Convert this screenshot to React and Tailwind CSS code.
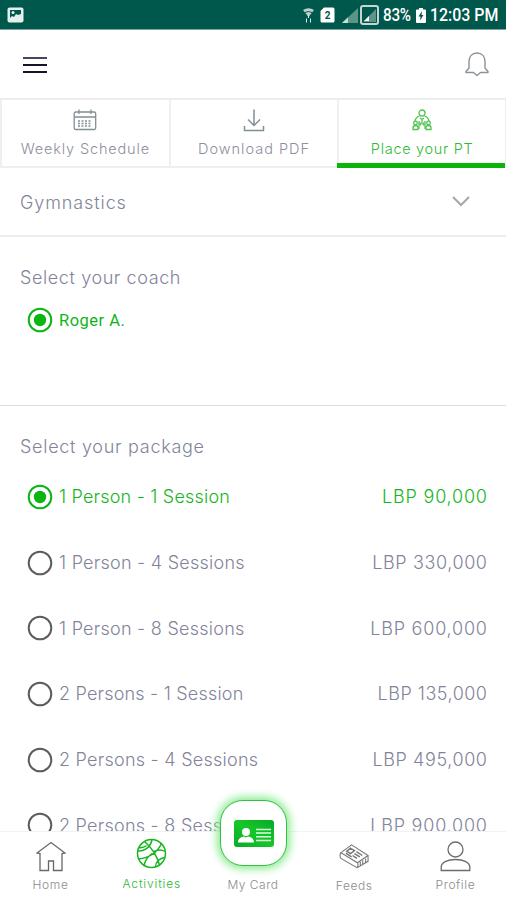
import { useState } from "react";

const packages = [
  { name: "1 Person - 1 Session", price: "LBP 90,000", nameCls: "tracking-[0.2px]", priceCls: "tracking-[0.8px] -mr-[0.8px]" },
  { name: "1 Person - 4 Sessions", price: "LBP 330,000", nameCls: "tracking-[0.25px]", priceCls: "tracking-[0.6px] -mr-[0.6px]" },
  { name: "1 Person - 8 Sessions", price: "LBP 600,000", nameCls: "tracking-[0.25px]", priceCls: "tracking-[0.8px] -mr-[0.8px]" },
  { name: "2 Persons - 1 Session", price: "LBP 135,000", nameCls: "tracking-[0.2px]", priceCls: "tracking-[0.5px] -mr-[0.5px]" },
  { name: "2 Persons - 4 Sessions", price: "LBP 495,000", nameCls: "tracking-[0.25px]", priceCls: "tracking-[0.6px] -mr-[0.6px]" },
  { name: "2 Persons - 8 Sessions", price: "LBP 900,000", nameCls: "tracking-[0.25px]", priceCls: "tracking-[0.8px] -mr-[0.8px]" },
];

function StatusBar() {
  return (
    <div className="h-[30px] shrink-0 bg-[#00574b] border-b border-[#7fa59e] flex items-center px-[7px] text-white">
      <svg width="17" height="16" viewBox="0 0 17 16">
        <rect x="0.5" y="0.5" width="16" height="15" rx="2" fill="#e4f0ed" />
        <path d="M3 3h11v4l-3 1-2-1-2 3-2-1-2 2z" fill="#00574b" />
        <circle cx="6" cy="5.5" r="1.500" fill="#e4f0ed" />
      </svg>

      <div className="ml-auto flex items-center pt-px">
        {/* wifi */}
        <svg className="mr-[5px]" width="13" height="17" viewBox="0 0 13 17" fill="none" stroke="#dcebe8">
          <path d="M1 3q5.500-3.500 11 0L6.500 10z" fill="#b9d2cd" stroke="none" />
          <path d="M3 5.500q3.500-2 7 0" stroke="#00574b" />
          <path d="M6.500 8v3M4.500 11.500v4M8.500 15.500v-4" />
        </svg>
        {/* sim */}
        <svg className="mr-[7px]" width="15" height="16" viewBox="0 0 15 16">
          <path d="M4 0.500h9a1.500 1.500 0 0 1 1.500 1.500v12a1.500 1.500 0 0 1-1.500 1.500H2A1.500 1.500 0 0 1 .5 14V4z" fill="#fff" />
          <text x="7.500" y="12" fontSize="10" fontWeight="700" fontFamily="Roboto" textAnchor="middle" fill="#00574b">2</text>
        </svg>
        {/* signal */}
        <svg className="mr-[2px]" width="16" height="15" viewBox="0 0 16 15">
          <path d="M0 15L16 0v15z" fill="#5c9489" />
          <path d="M0 15L6 9.300V15z" fill="#c7dcd8" />
        </svg>
        <svg className="mr-[4px]" width="19" height="20" viewBox="0 0 19 20">
          <rect x="1" y="1" width="17" height="18" rx="2" fill="none" stroke="#c5d6d3" strokeWidth="2" />
          <path d="M3 17L16 4v13z" fill="#5c9489" />
          <path d="M4 16l5-5v5z" fill="#fff" />
        </svg>
        <span className="w-[29px]">
          <span className="inline-block origin-left scale-x-[0.87] font-[Roboto,sans-serif] font-medium text-[17.5px] leading-none tracking-[-0.3px] whitespace-nowrap">83%</span>
        </span>
        <svg className="mx-[4px]" width="10" height="15" viewBox="0 0 10 15">
          <path d="M3 0h4v1.500h2a1 1 0 0 1 1 1V14a1 1 0 0 1-1 1H1a1 1 0 0 1-1-1V2.500a1 1 0 0 1 1-1h2z" fill="#fff" />
          <path d="M6 3L2.500 8.500h2L4 12.500 7.500 7h-2z" fill="#00574b" />
        </svg>
        <span className="w-[69px]">
          <span className="inline-block origin-left scale-x-[0.91] font-[Roboto,sans-serif] font-medium text-[17.5px] leading-none whitespace-nowrap">12:03 PM</span>
        </span>
      </div>
    </div>
  );
}

function Header() {
  return (
    <div className="h-[68px] shrink-0 flex items-center justify-between pl-[23px] pr-[17px]">
      <button className="w-6 flex flex-col gap-[5px] pt-px">
        <span className="h-[2px] w-full bg-[#46465e]" />
        <span className="h-[2px] w-full bg-[#14142d]" />
        <span className="h-[2px] w-full bg-[#14142d]" />
      </button>
      <svg width="24" height="25" viewBox="0 0 24 25" fill="none" stroke="#8b9399" strokeWidth="1.400" strokeLinejoin="round">
        <path d="M12 1c5 0 8 3.500 8 8.500V16l3 3.500v1h-7.500L12 23.500l-3.500-3H1v-1L4 16V9.500C4 4.500 7 1 12 1z" />
      </svg>
    </div>
  );
}

function CalendarIcon() {
  return (
    <svg width="24" height="22" viewBox="0 0 24 22" fill="none" stroke="#819094" strokeWidth="1.300">
      <rect x="1.200" y="3" width="21.500" height="17.500" rx="1.500" />
      <path d="M1 8h22M6 0.500V5M18 0.500V5" />
      <path d="M5 12h14M5 14.500h14M5 17h14" strokeDasharray="2 1.500" />
    </svg>
  );
}

function DownloadIcon() {
  return (
    <svg width="22" height="24" viewBox="0 0 22 24" fill="none" stroke="#819094" strokeWidth="1.500">
      <path d="M11 0.500V16M5 10.500l6 6 6-6M1.500 17v4.500h19V17" />
    </svg>
  );
}

function TrainerIcon() {
  return (
    <svg width="20" height="22" viewBox="0 0 20 22" fill="none" stroke="#52c452" strokeWidth="1.300">
      <circle cx="10" cy="4" r="3" />
      <path d="M7.500 7C4.500 8 3.500 9.500 3 12M12.500 7c3 1 4 2.500 4.500 5M8 9l2 1.500L12 9M10 10.500v5" />
      <circle cx="3.500" cy="14" r="1.800" />
      <circle cx="16.500" cy="14" r="1.800" />
      <path d="M1 20.500V19q0-2.500 2.500-2.500t2.500 2v2zM14 20.500v-2q0-2 2.500-2T19 19v1.500z" />
      <path d="M7 12v8M13 12v8M8.500 13.500v3M11.500 13.500v3" />
    </svg>
  );
}

function Tabs() {
  return (
    <div className="h-[70px] shrink-0 grid grid-cols-3 border-t-2 border-[#ededed] text-[14.5px] leading-5 text-[#8e8e9e]">
      <div className="flex flex-col items-center border-l-2 border-b-2 border-[#efefef] pt-[9px]">
        <div className="h-[24px] flex items-start"><CalendarIcon /></div>
        <span className="mt-[6px] whitespace-nowrap tracking-[0.85px]">Weekly Schedule</span>
      </div>
      <div className="flex flex-col items-center border-l-2 border-b-2 border-[#efefef] pt-[9px]">
        <div className="h-[24px] flex items-start"><DownloadIcon /></div>
        <span className="mt-[6px] whitespace-nowrap tracking-[1px]">Download PDF</span>
      </div>
      <div className="flex flex-col border-r border-[#efefef] text-[#31b935]">
        <div className="flex-1 flex flex-col items-center border-l-2 border-[#efefef] pt-[9px]">
          <div className="h-[24px] flex items-start"><TrainerIcon /></div>
          <span className="mt-[6px] whitespace-nowrap tracking-[0.7px]">Place your PT</span>
        </div>
        <div className="h-[5px] bg-[#09b509]" />
      </div>
    </div>
  );
}

function Radio({ checked }) {
  return (
    <svg className="shrink-0" width="26" height="26" viewBox="0 0 26 26">
      <circle cx="13" cy="13" r="11.300" fill="none" stroke={checked ? "#0cb514" : "#5c5c5c"} strokeWidth="2" />
      {checked && <circle cx="13" cy="13" r="6.200" fill="#0cb514" />}
    </svg>
  );
}

function BottomNav() {
  return (
    <nav className="relative h-[69px] shrink-0 bg-white border-t border-[#f0f2f4] grid grid-cols-5 text-center text-[12px] leading-4 text-[#8b8b8b]">
      <div className="flex flex-col items-center pt-[9px]">
        <svg width="30" height="31" viewBox="0 0 30 31" fill="none" stroke="#686868" strokeWidth="1.300">
          <path d="M4 12.500L1 12 15 1.500 29 12l-3 .5V29.500H17.500V20h-5v9.500H4z" />
        </svg>
        <span className="mt-[5px] tracking-[0.75px]">Home</span>
      </div>
      <div className="flex flex-col items-center pt-[6px] text-[#2cb832]">
        <svg width="31" height="31" viewBox="0 0 31 31" fill="none" stroke="#16b520" strokeWidth="1.500">
          <circle cx="15.500" cy="15.500" r="14" />
          <path d="M8.500 3.500C15 9 21 18 23.500 27M2.500 21C12 20 21 15 25.500 5.500M1.500 13c6 .5 13-3 14.500-11.500M2.500 9.500c2.500.5 5.500 0 8-2M18 13.500c4-2 8-2 11 0M19.500 29c0-5 4-9 9.500-9.500M8 27.500c1-5 4-9 8-12" />
        </svg>
        <span className="mt-[7px] tracking-[0.85px]">Activities</span>
      </div>
      <div className="flex flex-col items-center pt-[45px]">
        <span className="tracking-[0.5px]">My Card</span>
      </div>
      <div className="flex flex-col items-center pt-[11px]">
        <svg width="31" height="26" viewBox="0 0 32 26" fill="none" stroke="#777" strokeWidth="1.100">
          <path d="M13 1.500L30 12.500 19 20 2 9.500zM2 9.500q-2 3 0 6l16.500 9.500q2-2 .5-5M19 25l11-6.500v-6M22 19v4M24.500 17.500v4M27.500 15.500v4" />
          <path d="M12 5l4 2.500-4 3L8 8zM18 8.500l6 4M16 10.500l5.500 3.500M14 12.500l4.500 3M7 10l6 4" strokeWidth="1.500" />
        </svg>
        <span className="mt-[9px] tracking-[0.6px]">Feeds</span>
      </div>
      <div className="flex flex-col items-center pt-[9px]">
        <svg width="31" height="31" viewBox="0 0 31 31" fill="none" stroke="#6c6c6c" strokeWidth="1.300">
          <circle cx="15.500" cy="8.500" r="7.500" />
          <path d="M1.200 29.500V26c0-4.500 6-7.500 14.300-7.500S29.800 21.500 29.800 26v3.500z" />
        </svg>
        <span className="mt-[5px] tracking-[0.6px]">Profile</span>
      </div>

      {/* raised card button */}
      <button className="absolute left-[220px] -top-[32px] w-[67px] h-[66px] rounded-[23px] border border-[#35bf45] bg-white flex items-center justify-center shadow-[0_0_9px_3px_#8beb90]">
        <svg width="40" height="27" viewBox="0 0 40 27">
          <defs>
            <linearGradient id="card" x1="0" y1="1" x2="1" y2="0">
              <stop offset="0" stopColor="#08a82d" />
              <stop offset="0.500" stopColor="#16c728" />
              <stop offset="1" stopColor="#07a92a" />
            </linearGradient>
          </defs>
          <rect width="40" height="27" rx="3" fill="url(#card)" />
          <circle cx="12" cy="12" r="4" fill="#fff" />
          <path d="M4 22.500c0-4 3-5.500 6-6l2 1 2-1c3 .5 6 2 6 6z" fill="#fff" />
          <path d="M22 9.500h15M22 13h15M22 16.800h15M22 20.500h15" stroke="#dcffe0" strokeWidth="1.500" />
        </svg>
      </button>
    </nav>
  );
}

export default function App() {
  const [selected, setSelected] = useState(0);

  return (
    <div className="w-[506px] h-[900px] overflow-hidden bg-white flex flex-col font-[Inter,sans-serif] font-light text-[#82849a]">
      <StatusBar />
      <Header />
      <Tabs />

      {/* activity select */}
      <div className="h-[69px] shrink-0 flex items-center justify-between border-b-2 border-[#ededed] pl-[20px] pr-[36px] text-[18px]">
        <span className="pt-px tracking-[0.9px]">Gymnastics</span>
        <svg width="18" height="11" viewBox="0 0 18 11" fill="none" stroke="#a5a8a8" strokeWidth="2">
          <path d="M1 1l8 8 8-8" />
        </svg>
      </div>

      {/* coach */}
      <div className="h-[169px] shrink-0 border-b border-[#dedede] pl-[20px] pt-[27px] text-[18px]">
        <h2 className="leading-7 tracking-[0.6px]">Select your coach</h2>
        <div className="flex items-center mt-[15px] ml-[7px] text-[#10b518]">
          <Radio checked />
          <span className="ml-[6px] pt-[2px] font-[Roboto,sans-serif] font-normal text-[16.5px] tracking-[0.5px]">Roger A.</span>
        </div>
      </div>

      {/* packages */}
      <div className="flex-1 min-h-0 overflow-hidden pl-[20px] pr-[19px] pt-[27px] text-[18px]">
        <h2 className="leading-7 tracking-[0.72px]">Select your package</h2>
        <div className="mt-[3px]">
          {packages.map((p, i) => (
            <div
              key={p.name}
              onClick={() => setSelected(i)}
              className={`h-[65.7px] flex items-center pl-[7px] ${selected === i ? "text-[#16b51e]" : ""}`}
            >
              <Radio checked={selected === i} />
              <span className={`ml-[6px] whitespace-nowrap ${p.nameCls}`}>{p.name}</span>
              <span className={`ml-auto whitespace-nowrap ${p.priceCls}`}>{p.price}</span>
            </div>
          ))}
        </div>
      </div>

      <BottomNav />
    </div>
  );
}
